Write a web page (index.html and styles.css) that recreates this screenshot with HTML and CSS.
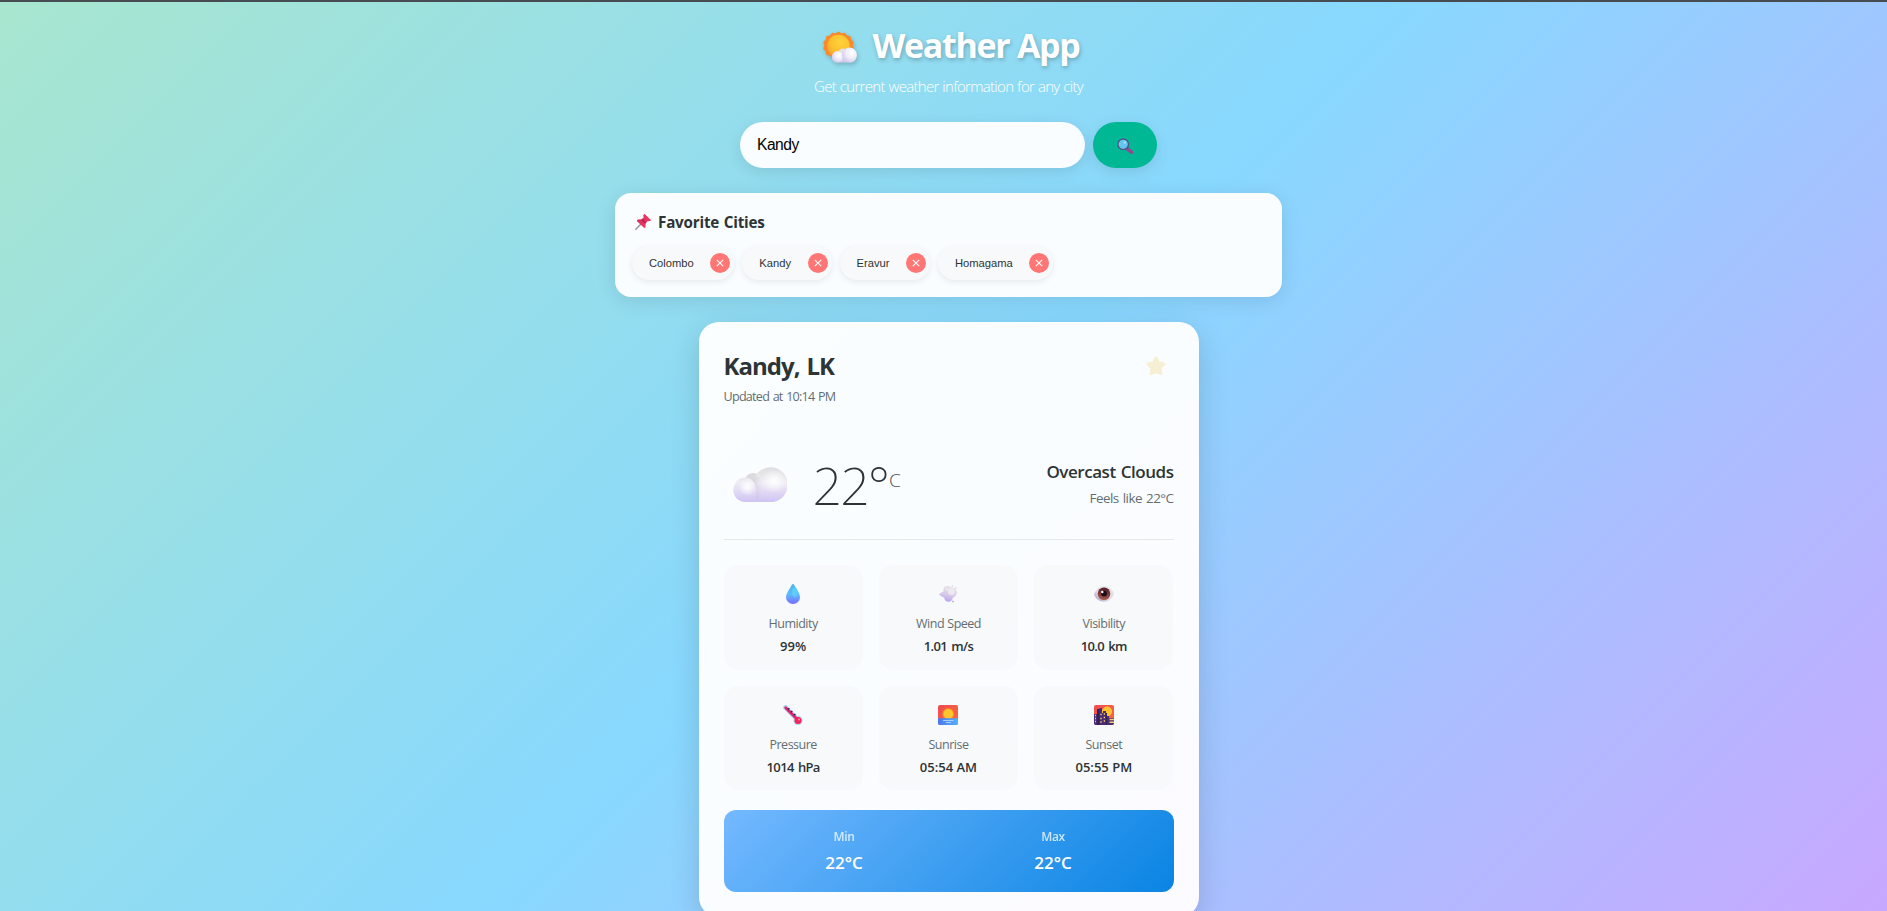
FILE: index.html
```html
<!DOCTYPE html>
<html lang="en">
<head>
<meta charset="utf-8">
<title>Weather App</title>
<link rel="stylesheet" href="styles.css">
</head>
<body>
<svg class="defs" width="0" height="0" aria-hidden="true">
  <defs>
    <radialGradient id="sun" cx=".6" cy=".35" r=".75"><stop offset="0" stop-color="#ffd23c"/><stop offset=".6" stop-color="#fbc02d"/><stop offset="1" stop-color="#f29a2e"/></radialGradient>
    <radialGradient id="puff" cx=".65" cy=".35" r=".75"><stop offset="0" stop-color="#ffffff"/><stop offset=".5" stop-color="#efecf5"/><stop offset="1" stop-color="#cdc3ee"/></radialGradient>
    <linearGradient id="cloudA" x1="0" y1="0" x2="0" y2="1"><stop offset="0" stop-color="#dedede"/><stop offset=".45" stop-color="#efedf5"/><stop offset="1" stop-color="#cfc3f3"/></linearGradient>
    <radialGradient id="shine"><stop offset="0" stop-color="#fff"/><stop offset="1" stop-color="#fff" stop-opacity="0"/></radialGradient>
    <linearGradient id="shade" x1="0" y1="0" x2="1" y2="0"><stop offset="0" stop-color="#aaa4b2" stop-opacity=".35"/><stop offset="1" stop-color="#cfc8da" stop-opacity="0"/></linearGradient>
    <linearGradient id="drop" x1="0" y1="0" x2="0" y2="1"><stop offset="0" stop-color="#4bb4ee"/><stop offset=".5" stop-color="#5cbcff"/><stop offset="1" stop-color="#7a6cff"/></linearGradient>
    <linearGradient id="pin" x1="0" y1="0" x2="1" y2="1"><stop offset="0" stop-color="#c72a5c"/><stop offset="1" stop-color="#ff3f66"/></linearGradient>
    <linearGradient id="wind" gradientUnits="userSpaceOnUse" x1="13" y1="2" x2="9" y2="18"><stop offset="0" stop-color="#e6dfe8"/><stop offset=".55" stop-color="#d8cce6"/><stop offset="1" stop-color="#b9a0f5"/></linearGradient>
    <linearGradient id="eye" x1="1" y1="0" x2="0" y2="1"><stop offset="0" stop-color="#e9e5ea"/><stop offset=".6" stop-color="#ded8e0"/><stop offset="1" stop-color="#a793c9"/></linearGradient>
    <linearGradient id="iris" x1=".6" y1="0" x2=".4" y2="1"><stop offset="0" stop-color="#551d2c"/><stop offset="1" stop-color="#a85c4c"/></linearGradient>
    <linearGradient id="sea" x1="0" y1="0" x2="1" y2="0"><stop offset="0" stop-color="#4a78ea"/><stop offset="1" stop-color="#55aeff"/></linearGradient>
    <linearGradient id="sky" x1="0" y1="0" x2="1" y2="1"><stop offset="0" stop-color="#ee4b50"/><stop offset="1" stop-color="#fb6a3d"/></linearGradient>
  </defs>
</svg>
<main class="app">
  <header class="header">
    <h1 class="title">
      <svg class="title-icon" width="35" height="35" viewBox="0 0 35 35">
        <path fill="#f98a2b" d="M15.500 1.500L18.300 3.200L21.500 2.500L23.600 5L26.800 5.700L27.500 9L29.900 11.300L29 14.500L29.900 17.800L27.500 20L26.800 23.300L23.600 24L21.500 26.700L18.300 26L15.500 27.600L12.600 26L9.400 26.700L7.400 24L4 23.300L3.400 20L1 17.800L2 14.500L1 11.300L3.400 9L4 5.700L7.400 5L9.400 2.500L12.600 3.200Z" stroke="#f98a2b" stroke-width="1.500" stroke-linejoin="round"/>
        <circle cx="15.500" cy="15" r="11.200" fill="url(#sun)"/>
        <circle cx="20" cy="22" r="4.500" fill="#e3dfe9"/>
        <rect x="9" y="22" width="24" height="9.500" rx="4.700" fill="#d2cbe9"/>
        <circle cx="14.500" cy="25.800" r="5.700" fill="url(#puff)"/>
        <circle cx="26.500" cy="24" r="7.500" fill="url(#puff)"/>
      </svg>
      <span class="title-text">Weather App</span>
    </h1>
    <p class="subtitle">Get current weather information for any city</p>
  </header>

  <form class="search">
    <input class="search-input" type="text" value="Kandy">
    <button class="search-button" type="button" aria-label="Search">
      <svg width="18" height="18" viewBox="0 0 18 18">
        <path d="M11 11.500L15.500 15.200" stroke="#8d4a8c" stroke-width="3.600" stroke-linecap="round"/>
        <circle cx="7.200" cy="7.300" r="5.300" fill="#62c6ee" stroke="#51508c" stroke-width="1.300"/>
        <circle cx="8.800" cy="5.400" r="1.200" fill="#a6e6fb"/>
      </svg>
    </button>
  </form>

  <section class="favorites">
    <h2 class="favorites-title">
      <svg width="18" height="18" viewBox="0 0 18 18">
        <path d="M7 11L1.800 16.300" stroke="#9b93a3" stroke-width="1.500" stroke-linecap="round"/>
        <path d="M10.400 .9L17 7.300L15 8.300L13.400 8.300L11.700 10.700L11.400 14.400L10.200 15L2.800 8L3.600 6.500L7.600 6.200L9.700 4.400L9.300 2.300Z" fill="url(#pin)"/>
        <path d="M10.500 1L17 7.300L15.600 8L9.500 2.200Z" fill="#f23c62"/>
        <path d="M8 6.500L11.300 9.800" stroke="#a52252" stroke-width="1.600"/>
      </svg>
      <span class="favorites-text">Favorite Cities</span>
    </h2>
    <div class="chips">
      <div class="chip"><span class="chip-name">Colombo</span><button class="chip-remove" type="button"><svg width="8" height="8" viewBox="0 0 8 8"><path d="M.8 .8L7.200 7.200M7.200 .8L.8 7.200"/></svg></button></div>
      <div class="chip"><span class="chip-name">Kandy</span><button class="chip-remove" type="button"><svg width="8" height="8" viewBox="0 0 8 8"><path d="M.8 .8L7.200 7.200M7.200 .8L.8 7.200"/></svg></button></div>
      <div class="chip"><span class="chip-name">Eravur</span><button class="chip-remove" type="button"><svg width="8" height="8" viewBox="0 0 8 8"><path d="M.8 .8L7.200 7.200M7.200 .8L.8 7.200"/></svg></button></div>
      <div class="chip"><span class="chip-name">Homagama</span><button class="chip-remove" type="button"><svg width="8" height="8" viewBox="0 0 8 8"><path d="M.8 .8L7.200 7.200M7.200 .8L.8 7.200"/></svg></button></div>
    </div>
  </section>

  <article class="card">
    <div class="card-head">
      <div>
        <h2 class="city">Kandy, LK</h2>
        <p class="updated">Updated at 10:14 PM</p>
      </div>
      <svg class="star" width="20" height="20" viewBox="0 0 20 20"><path d="M10 1.500L12.700 6.400L18.500 7.800L14.600 12L15.200 18L10 15.900L4.800 18L5.400 12L1.500 7.800L7.300 6.400Z"/></svg>
    </div>

    <div class="current">
      <div class="reading">
        <svg class="cloud" width="54" height="36" viewBox="0 0 54 36">
          <circle cx="20" cy="14" r="8" fill="#dcdadd"/>
          <path d="M11.500 35a11.700 12.200 0 1 1 9-20.500A17.300 17.500 0 1 1 40 35Z" fill="url(#cloudA)"/>
          <ellipse cx="41" cy="14" rx="13" ry="12" fill="url(#shine)"/>
          <ellipse cx="14.500" cy="20" rx="9" ry="9" fill="url(#shine)"/>
          <path d="M20 14Q25 20 23 33Q31 28 29 16Q27 11 23.500 9Z" fill="url(#shade)"/>
        </svg>
        <div class="temp"><span class="temp-value">22°</span><span class="temp-unit">C</span></div>
      </div>
      <div class="summary">
        <p class="condition">Overcast Clouds</p>
        <p class="feels">Feels like 22°C</p>
      </div>
    </div>

    <div class="details">
      <div class="detail">
        <svg width="20" height="20" viewBox="0 0 20 20"><path d="M10 0C11 0 11.600 1.500 12.500 3.200C14.500 6.800 17 9.500 17 13.200A7 6.800 0 0 1 3 13.200C3 9.500 5.500 6.800 7.500 3.200C8.400 1.500 9 0 10 0Z" fill="url(#drop)"/><ellipse cx="12" cy="8.500" rx="3" ry="5" fill="#62d6ff" opacity=".65"/></svg>
        <p class="label">Humidity</p><p class="value">99%</p>
      </div>
      <div class="detail">
        <svg width="20" height="20" viewBox="0 0 20 20"><g fill="url(#wind)"><path d="M.8 10.200L6 7L10 5L14 12L8 14L4.500 13Z"/><circle cx="9.500" cy="6" r="4"/><circle cx="13.500" cy="8.500" r="5.200"/><circle cx="10.500" cy="13.500" r="4.300"/><circle cx="18" cy="4" r="1"/><circle cx="14.500" cy="2" r="1"/><circle cx="15" cy="17.500" r="1"/></g><circle cx="13.500" cy="7.500" r="3.500" fill="#f1edf1" opacity=".8"/><circle cx="9" cy="5" r="2" fill="#eae5ec"/></svg>
        <p class="label">Wind Speed</p><p class="value value-tight">1.01 m/s</p>
      </div>
      <div class="detail">
        <svg width="20" height="20" viewBox="0 0 20 20"><path d="M0 10.500C2 5 6 2.300 10 2.300S18 5 20 9.500C18.500 15 14 17.700 10 17.700S2 15.500 0 10.500Z" fill="url(#eye)"/><circle cx="10" cy="9.800" r="6.300" fill="url(#iris)"/><circle cx="10" cy="9.600" r="3" fill="#1d0c18"/><circle cx="8.300" cy="8" r="1.200" fill="#fff"/></svg>
        <p class="label">Visibility</p><p class="value value-tight">10.0 km</p>
      </div>
      <div class="detail">
        <svg width="20" height="20" viewBox="0 0 20 20"><path d="M2.500 2.500L15 15" stroke="#b4daf9" stroke-width="5" stroke-linecap="round"/><circle cx="15" cy="15.500" r="4.700" fill="#b4daf9"/><path d="M2.700 2.700L15 15" stroke="#e0246c" stroke-width="2.900" stroke-linecap="round"/><circle cx="15" cy="15.500" r="3.500" fill="#f5245c"/><path d="M5 4.500L6.300 3.200M8 7.300L9.300 6M11 10.300L12.300 9" stroke="#33205a" stroke-width="1.500"/><circle cx="16" cy="14.500" r="1" fill="#ff8d9c"/></svg>
        <p class="label">Pressure</p><p class="value value-tight">1014 hPa</p>
      </div>
      <div class="detail">
        <svg width="20" height="20" viewBox="0 0 20 20"><rect width="20" height="20" rx="2" fill="url(#sky)"/><circle cx="10.300" cy="9" r="6" fill="#fb8b28"/><circle cx="10.300" cy="9" r="4.800" fill="#ffc62f"/><path d="M0 13.300H20V18a2 2 0 0 1-2 2H2a2 2 0 0 1-2-2Z" fill="url(#sea)"/><path d="M5 15.500H15.500M8 17.500H13" stroke="#b9e1ff" stroke-width=".8"/></svg>
        <p class="label">Sunrise</p><p class="value">05:54 AM</p>
      </div>
      <div class="detail">
        <svg width="20" height="20" viewBox="0 0 20 20"><rect width="20" height="20" rx="2" fill="url(#sky)"/><circle cx="13" cy="6.500" r="5" fill="#ffc531"/><path d="M0 9H3V4H5.500V3H8V8H9V6H12V8H13V11H15V13H20V18a2 2 0 0 1-2 2H2a2 2 0 0 1-2-2Z" fill="#4b2d6f"/><path d="M3 4H5.500V20H3ZM12 8H13V20H12Z" fill="#33205a"/><path d="M1 10.500H2M1 13.500H2M1 16.500H2M6.300 9.500H7.700M6.300 13.500H7.700M6.300 17H7.700M9.700 9H11M9.700 12.500H11M9.700 16H11M15.500 14.500H20M15.500 17.300H20" stroke="#f3cf6c" stroke-width="1.400"/></svg>
        <p class="label">Sunset</p><p class="value">05:55 PM</p>
      </div>
    </div>

    <div class="range">
      <div class="range-item"><p class="range-label">Min</p><p class="range-value">22°C</p></div>
      <div class="range-item"><p class="range-label">Max</p><p class="range-value">22°C</p></div>
    </div>
  </article>
</main>
</body>
</html>
```
FILE: styles.css
```css
* { box-sizing: border-box; margin: 0; padding: 0; }
body {
  height: 911px;
  overflow: hidden;
  border-top: 2px solid #464c51;
  padding-left: 10px;
  background: linear-gradient(135deg, #a8e6cf 0%, #88d8ff 50%, #c8a8ff 100%);
  font-family: "Open Sans", "Noto Sans", sans-serif;
  color: #2d3436;
}
.defs { position: absolute; }
.app { display: flex; flex-direction: column; align-items: center; padding-top: 20px; }
.header { margin-bottom: 26px; text-align: center; color: #fff; }
.title {
  display: flex;
  justify-content: center;
  gap: 14px;
  height: 46px;
  margin-bottom: 8px;
  padding-left: 6px;
  font-size: 34px;
  line-height: 46px;
  font-weight: 700;
  letter-spacing: -1.3px;
  text-shadow: 1px 2px 4px rgba(0, 0, 0, 0.25);
}
.title-icon { margin-top: 9px; filter: drop-shadow(1px 2px 2px rgba(0, 0, 0, 0.2)); }
.subtitle { font-size: 15px; line-height: 20px; font-weight: 300; letter-spacing: -0.7px; word-spacing: 0.6px; }
.search { display: flex; gap: 8px; height: 46px; margin-bottom: 25px; }
.search-input {
  width: 345px;
  border: 0;
  border-radius: 23px;
  padding: 0 16px 0 17px;
  background: #fafdff;
  font: 15.6px "Liberation Sans", Arial, sans-serif;
  letter-spacing: -0.5px;
  color: #000;
  box-shadow: 0 4px 15px rgba(0, 0, 0, 0.1);
}
.search-button {
  display: flex;
  align-items: center;
  justify-content: center;
  width: 64px;
  border: 0;
  border-radius: 23px;
  background: #00b894;
  box-shadow: 0 4px 15px rgba(0, 0, 0, 0.1);
}
.search-button svg { margin-top: 2px; }
.favorites {
  width: 667px;
  height: 104px;
  margin-bottom: 25px;
  padding: 18px 17px 16px;
  border-radius: 16px;
  background: #fafdff;
  box-shadow: 0 4px 20px rgba(0, 0, 0, 0.1);
}
.favorites-title { display: flex; gap: 6px; margin-bottom: 13px; padding-left: 2px; font-size: 15.2px; line-height: 22px; font-weight: 700; letter-spacing: -0.2px; word-spacing: 1px; }
.favorites-title svg { margin-top: 2px; }
.chips { display: flex; gap: 8px; }
.chip {
  display: flex;
  align-items: center;
  height: 34px;
  padding: 0 4px 0 17px;
  border-radius: 17px;
  background: #f8f9fa;
  box-shadow: 0 2px 6px rgba(0, 0, 0, 0.08);
}
.chip-name { margin-right: 16.5px; font: 11.2px "Liberation Sans", Arial, sans-serif; }
.chip-remove { display: flex; align-items: center; justify-content: center; width: 20px; height: 20px; border: 0; border-radius: 50%; background: #ff7675; }
.chip-remove path { fill: none; stroke: #fff; stroke-width: 1.1; }
.card {
  width: 500px;
  height: 595px;
  padding: 25px;
  border-radius: 20px;
  background: linear-gradient(135deg, #fafeff 0%, #fafdff 50%, #fcfbff 100%);
  box-shadow: 0 8px 30px rgba(0, 0, 0, 0.15);
}
.card-head { display: flex; justify-content: space-between; height: 58px; padding: 2px 8px 0 0; }
.city { margin-bottom: 6px; font-size: 24px; line-height: 33px; font-weight: 700; letter-spacing: -0.95px; word-spacing: 1.5px; }
.updated { font-size: 12.6px; line-height: 18px; letter-spacing: -0.75px; word-spacing: 1px; color: #636e72; }
.star { margin-top: 7px; fill: #f0c23e; stroke: #f0c23e; stroke-width: 2.4; stroke-linejoin: round; opacity: 0.22; }
.current { display: flex; align-items: center; justify-content: space-between; height: 135px; margin-bottom: 25px; padding-top: 25px; border-bottom: 1px solid #e3e8eb; }
.reading { display: flex; align-items: center; gap: 26px; padding-left: 9px; }
.cloud { margin-top: 1px; }
.temp { display: flex; align-items: flex-start; line-height: 60px; }
.temp-value { font-family: "Noto Sans", sans-serif; font-size: 52px; font-weight: 200; letter-spacing: -2px; }
.temp-unit { margin: 11px 0 0 1px; font-size: 19px; line-height: 28px; font-weight: 300; color: #4c565a; }
.summary { text-align: right; }
.condition { margin: -2px 0 4px; font-size: 17px; line-height: 24px; font-weight: 600; letter-spacing: -0.45px; word-spacing: 1px; }
.feels { font-size: 13.4px; line-height: 20px; letter-spacing: -0.5px; word-spacing: 1px; color: #636e72; }
.details { display: grid; grid-template-columns: repeat(3, 1fr); gap: 16px; margin-bottom: 20px; }
.detail { height: 104.5px; padding-top: 19px; border-radius: 14px; background: #f8f9fb; text-align: center; }
.detail svg { display: block; margin: 0 auto 11px; }
.label { font-size: 12.5px; line-height: 18px; letter-spacing: -0.5px; word-spacing: 0.5px; color: #636e72; }
.value { margin-top: 4px; font-size: 13px; line-height: 18px; font-weight: 600; }
.value-tight { letter-spacing: -0.65px; word-spacing: 1.5px; }
.range {
  display: flex;
  height: 82px;
  padding: 17px 16px 15px;
  border-radius: 12px;
  background: linear-gradient(135deg, #74b9ff, #0984e3);
  color: #fff;
  text-align: center;
}
.range-item { flex: 1; }
.range-label { font-size: 12px; line-height: 20px; font-weight: 600; letter-spacing: -0.4px; opacity: 0.75; }
.range-value { margin-top: 5px; font-size: 17px; line-height: 22px; font-weight: 600; }
```
